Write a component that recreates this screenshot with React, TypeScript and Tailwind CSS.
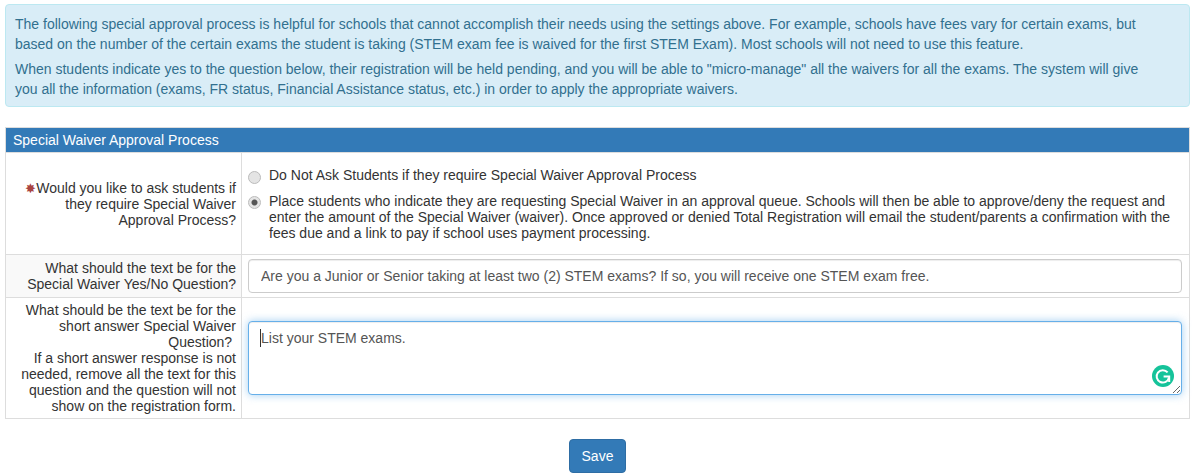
export default function App() {
  return (
    <div className="h-[475px] w-[1196px] overflow-hidden bg-white pl-[5px] pr-[6px] pt-[4px] font-['Liberation_Sans',Arial,sans-serif] text-[14px] text-[#333]">
      <div className="h-[103px] rounded border border-[#bce8f1] bg-[#d9edf7] pl-[9px] pr-[30px] pt-[9px] leading-[20px] text-[#31708f]">
        <p className="mb-[5px]">
          The following special approval process is helpful for schools that cannot accomplish their needs using the settings above. For example, schools have fees vary for certain exams, but based on the number of the certain exams the student is taking (STEM exam fee is waived for the first STEM Exam). Most schools will not need to use this feature.
        </p>
        <p>
          When students indicate yes to the question below, their registration will be held pending, and you will be able to "micro-manage" all the waivers for all the exams. The system will give you all the information (exams, FR status, Financial Assistance status, etc.) in order to apply the appropriate waivers.
        </p>
      </div>

      <div className="mt-[20px] border border-[#ddd]">
        <div className="flex h-[25px] items-center border-b border-[#ddd] bg-[#337ab7] pl-[7px] text-white">
          Special Waiver Approval Process
        </div>

        <div className="flex h-[102px] border-b border-[#ddd]">
          <div className="flex w-[236px] shrink-0 items-center justify-end border-r border-[#ddd] pl-[8px] pr-[5px] text-right leading-[16px]">
            <div className="mt-[1px]">
              <span className="text-[13px] leading-none text-[#a94442]">✸</span>
              Would you like to ask students if they require Special Waiver Approval Process?
            </div>
          </div>
          <div className="flex-1 pl-[6px] pr-[9px] pt-[14px] leading-[16px]">
            <div className="flex items-start">
              <input
                type="radio"
                name="approval"
                className="mt-[4px] h-[13px] w-[13px] shrink-0 appearance-none rounded-full border border-[#bbb] bg-[#e4e4e4]"
              />
              <span className="ml-[8px]">Do Not Ask Students if they require Special Waiver Approval Process</span>
            </div>
            <div className="mt-[9px] flex items-start">
              <input
                type="radio"
                name="approval"
                defaultChecked
                className="mt-[3px] h-[13px] w-[13px] shrink-0 appearance-none rounded-full border border-[#bbb] bg-[radial-gradient(circle,#555_0,#555_2.5px,#e4e4e4_3.5px)]"
              />
              <span className="ml-[8px]">
                Place students who indicate they are requesting Special Waiver in an approval queue. Schools will then be able to approve/deny the request and enter the amount of the Special Waiver (waiver). Once approved or denied Total Registration will email the student/parents a confirmation with the fees due and a link to pay if school uses payment processing.
              </span>
            </div>
          </div>
        </div>

        <div className="flex h-[43px] border-b border-[#ddd]">
          <div className="flex w-[236px] shrink-0 items-center justify-end border-r border-[#ddd] bg-[#f9f9f9] pl-[8px] pr-[5px] text-right leading-[16px]">
            What should the text be for the Special Waiver Yes/No Question?
          </div>
          <div className="flex-1 pl-[6px] pr-[7px] pt-[4px]">
            <input
              readOnly
              value="Are you a Junior or Senior taking at least two (2) STEM exams? If so, you will receive one STEM exam free."
              className="h-[34px] w-full rounded border border-[#ccc] bg-white px-[12px] text-[#555] shadow-[inset_0_1px_1px_rgba(0,0,0,0.075)] outline-none"
            />
          </div>
        </div>

        <div className="flex h-[120px]">
          <div className="w-[236px] shrink-0 border-r border-[#ddd] pl-[8px] pr-[5px] pt-[4px] text-right leading-[16px]">
            What should be the text be for the short answer Special Waiver Question?&nbsp;
            <br />
            If a short answer response is not needed, remove all the text for this question and the question will not show on the registration form.
          </div>
          <div className="flex-1 pl-[6px] pr-[7px] pt-[23px]">
            <div className="relative h-[74px]">
              <textarea
                readOnly
                defaultValue="List your STEM exams."
                className="block h-full w-full rounded border border-[#66afe9] bg-white px-[12px] py-[6px] leading-[20px] text-[#555] shadow-[inset_0_1px_1px_rgba(0,0,0,0.075),0_0_8px_rgba(102,175,233,0.6)] outline-none"
              />
              <span className="absolute left-[12px] top-[8px] h-[18px] w-px bg-[#333]" />
              <svg viewBox="0 0 22 22" className="absolute bottom-[8px] right-[8px] h-[22px] w-[22px]">
                <circle cx="11" cy="11" r="11" fill="#15c39a" />
                <path d="M15.6 7.4A6.2 6.2 0 1 0 16.9 12.6" fill="none" stroke="#fff" strokeWidth="2" />
                <path d="M11.6 11.6H17.2V17" fill="none" stroke="#fff" strokeWidth="2" />
              </svg>
            </div>
          </div>
        </div>
      </div>

      <div className="mt-[20px] flex justify-center">
        <button className="h-[34px] w-[57px] rounded border border-[#2e6da4] bg-[#337ab7] text-white">Save</button>
      </div>
    </div>
  );
}
